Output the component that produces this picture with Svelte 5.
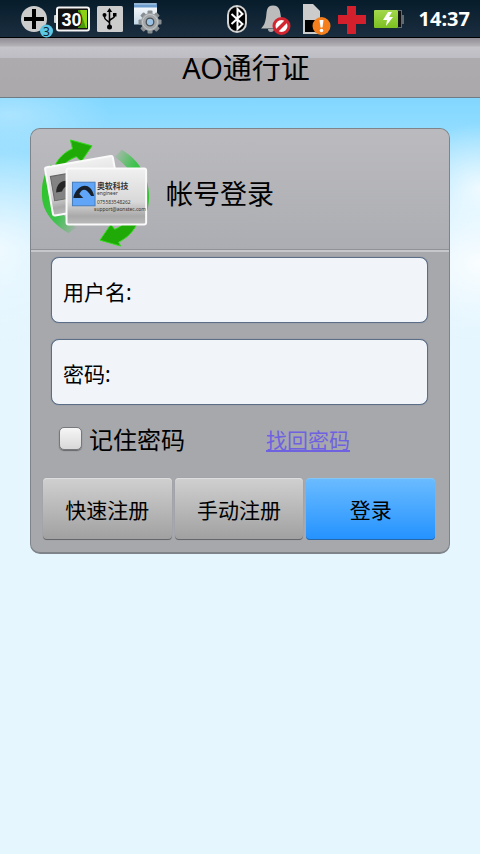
<script>
  let username = $state('');
  let password = $state('');
  let remember = $state(false);
</script>

<div class="screen">
  <header class="status">
    <svg viewBox="0 0 38 38" aria-hidden="true">
      <circle cx="18" cy="19" r="13" fill="#ccc" />
      <path d="M18 9v20M8 19h20" stroke="#000" stroke-width="4" />
      <circle cx="30.500" cy="31" r="6.500" fill="#5cc8e4" />
      <text x="30.500" y="35.500" font-size="12" text-anchor="middle" fill="#123">3</text>
    </svg>
    <svg viewBox="0 0 38 38" aria-hidden="true">
      <rect x="0" y="15" width="4" height="8" rx="1" fill="#ccd4d8" />
      <rect x="3" y="7.500" width="32" height="23" rx="2" fill="#111" stroke="#f4f4f4" stroke-width="2" />
      <path d="M24 10h9v18h-9z" fill="#8ed014" />
      <path d="M24 10h2l6 18h-8z" fill="#4b9c08" />
      <text x="17.500" y="25.500" font-family="Liberation Sans, sans-serif" font-size="18" font-weight="bold" text-anchor="middle" fill="#fff" stroke="#111" stroke-width="2" paint-order="stroke">30</text>
    </svg>
    <svg viewBox="0 0 38 38" aria-hidden="true">
      <rect x="5" y="6" width="26" height="26" rx="1.500" fill="#ccc" />
      <path d="M17.500 27V10M17.500 23c-1-3-5-2-5-6v-2M17.500 21c1-3 5-2 5-5v-2" fill="none" stroke="#000" stroke-width="1.500" />
      <path d="M14.800 12L17.500 8l2.700 4z" />
      <rect x="21" y="13" width="3.500" height="3.500" />
      <circle cx="12.500" cy="15" r="2" />
      <circle cx="17.500" cy="27" r="2.500" />
    </svg>
    <svg viewBox="0 0 38 38" aria-hidden="true">
      <defs>
        <linearGradient id="win" x2="0" y2="1"><stop stop-color="#fff" /><stop offset="1" stop-color="#c2d6e6" /></linearGradient>
      </defs>
      <rect x="4" y="3.500" width="23" height="21" fill="url(#win)" />
      <path d="M4 3.500h23v4H4z" fill="#6d9dcc" />
      <path d="M4 4h22" stroke="#b6d2ec" />
      <g transform="translate(20 22)">
        <g fill="#888d91">
          {#each [0, 45, 90, 135] as angle}
            <rect x="-2.500" y="-11.500" width="5" height="23" rx="1" transform="rotate({angle})" />
          {/each}
        </g>
        <circle r="6.500" fill="none" stroke="#a2a6a8" stroke-width="5" />
        <circle r="7.500" fill="none" stroke="#c4c7c8" stroke-width="1" />
        <circle r="3.800" fill="#9cc3e4" stroke="#4b5358" stroke-width="1.300" />
      </g>
    </svg>
    <span class="space"></span>
    <svg viewBox="0 0 38 38" aria-hidden="true">
      <rect x="9" y="6" width="18" height="26" rx="9" fill="#000" stroke="#d2d2d2" stroke-width="2" />
      <path d="M12.500 14l11 10-5 5V9l5 5-11 10" fill="none" stroke="#fff" stroke-width="2" />
    </svg>
    <svg viewBox="0 0 38 38" aria-hidden="true">
      <path d="M16 5.500c7 0 7 6 8 12s3 8 5 11H4c3-3 4-5 5-11s0-12 7-12z" fill="#bcbcbc" />
      <path d="M11 29h6a3 3 0 0 1-6 0z" fill="#aaa" />
      <circle cx="24.500" cy="26" r="7.500" fill="#fff" stroke="#d22530" stroke-width="3" />
      <path d="M19.500 31l10-10" stroke="#d22530" stroke-width="3.500" />
    </svg>
    <svg viewBox="0 0 38 38" aria-hidden="true">
      <path d="M8 4h10l7 7v23H8z" fill="#ccc" />
      <path d="M10 20h15v12H10z" fill="#000" />
      <circle cx="26.500" cy="26" r="9" fill="#f47f1c" />
      <path d="M24.500 20h4l-1 7.500h-2z" fill="#fff" />
      <circle cx="26.500" cy="30.500" r="1.800" fill="#fff" />
    </svg>
    <svg viewBox="0 0 38 38" aria-hidden="true">
      <path d="M14 6h9v9h10v9H23v10h-9V24H5v-9h9z" fill="#d41f2c" />
    </svg>
    <svg viewBox="0 0 38 38" aria-hidden="true">
      <defs>
        <linearGradient id="charge" x2="0" y2="1"><stop stop-color="#a3d84c" /><stop offset="1" stop-color="#7cc021" /></linearGradient>
      </defs>
      <path d="M27 10h4v5h2v9h-2v4h-4z" fill="#606a72" />
      <path d="M27 11h3v16h-3z" fill="#111" />
      <rect x="3" y="10" width="24" height="18" rx="1" fill="url(#charge)" />
      <path d="M17 12l-5 8h4l-1 6 7-9h-4l3-5z" fill="#fff" />
    </svg>
    <time>14:37</time>
  </header>

  <h1>AO通行证</h1>

  <main>
    <form class="card" onsubmit={(e) => e.preventDefault()}>
      <div class="head">
        <svg class="logo" viewBox="0 0 114 114" aria-hidden="true">
          <defs>
            <linearGradient id="arcR" x1="0" y1="0" x2="1" y2="1"><stop offset="0" stop-color="#38c048" stop-opacity="0" /><stop offset=".4" stop-color="#3cc34b" /><stop offset="1" stop-color="#28c51b" /></linearGradient>
            <linearGradient id="arcL" x1="1" y1="1" x2="0" y2="0"><stop offset="0" stop-color="#38c048" stop-opacity="0" /><stop offset=".4" stop-color="#3cc34b" /><stop offset="1" stop-color="#28c51b" /></linearGradient>
            <linearGradient id="paper" x2="0" y2="1"><stop stop-color="#f0f0f0" /><stop offset=".6" stop-color="#d8d8d8" /><stop offset=".85" stop-color="#a9a9a9" /><stop offset="1" stop-color="#bbb" /></linearGradient>
          </defs>
          <path d="M82 12C98 21 110 38 110 59c0 12-3 21-8 28l-6-6c7-20 5-44-21-62z" fill="url(#arcR)" />
          <path d="M28 97C7 84 0 70 1 54c0-10 3-20 9-27l8 6C10 54 14 74 36 91z" fill="url(#arcL)" />
          <path d="M13 31C17 20 25 14 32 11l-2-9 22 6-11 16-5-5C28 22 23 26 20 33z" fill="#20aa08" stroke="#35d920" />
          <path d="M99 85c-5 11-12 17-20 21l2 4-21-6 11-16 4 5c5-2 9-5 11-8z" fill="#20aa08" stroke="#35d920" />
          <g transform="rotate(-10 40 45)">
            <rect x="7" y="24" width="70" height="50" rx="2" fill="url(#paper)" stroke="#fafafa" stroke-width="2" />
            <rect x="11" y="34" width="23" height="25" fill="#838383" stroke="#666" />
            <path d="M14 51c2-11 12-13 19-6v5c-6-5-10-4-13 1z" fill="#252525" />
          </g>
          <rect x="26" y="31" width="81" height="57" rx="2" fill="url(#paper)" stroke="#fafafa" stroke-width="2" />
          <rect x="32" y="45" width="23" height="24" fill="#60a5f8" stroke="#447bbc" />
          <path d="M33 60c4-14 18-16 21-1h-3c-5-8-9-8-12-2l4 4H34c-1 0-1 0-1-1z" fill="#18202b" />
          <g fill="#333">
            <text x="57" y="52" font-size="8" font-weight="bold">奥软科技</text>
            <text x="57" y="58" font-size="5">engineer</text>
            <text x="57" y="67" font-size="5">075583548262</text>
            <text x="54" y="74" font-size="5">support@aonstec.com</text>
          </g>
        </svg>
        <h2>帐号登录</h2>
      </div>
      <div class="fields">
        <label class="field">用户名:<input type="text" bind:value={username} /></label>
        <label class="field">密码:<input type="password" bind:value={password} /></label>
      </div>
      <div class="options">
        <label class="remember"><input type="checkbox" bind:checked={remember} />记住密码</label>
        <div class="recover"><a href="#recover">找回密码</a></div>
      </div>
      <div class="actions">
        <button type="button">快速注册</button>
        <button type="button">手动注册</button>
        <button type="submit" class="primary">登录</button>
      </div>
    </form>
  </main>
</div>

<style>
  :global(body) { margin: 0; }
  * { box-sizing: border-box; }
  .screen {
    min-height: 100vh;
    display: flex;
    flex-direction: column;
    background: #e6f6fe;
    color: #000;
    font-family: "Noto Sans", "Noto Sans CJK SC", sans-serif;
  }
  .status {
    height: 38px;
    padding: 0 10px 0 16px;
    display: flex;
    align-items: center;
    background: linear-gradient(#071c2b, #1b2e40);
    border-bottom: 1px solid #000;
  }
  .status svg { width: 38px; height: 38px; flex: none; }
  .space { flex: 1; }
  time {
    margin-left: 10px;
    color: #fff;
    font-size: 20px;
    line-height: 38px;
    font-weight: bold;
  }
  h1 {
    margin: 0;
    height: 60px;
    padding-left: 12px;
    text-align: center;
    font-size: 29px;
    line-height: 60px;
    font-weight: 400;
    background: linear-gradient(#8f8d93 0, #b4b2b7 8px, #c5c4ca 9px, #bebdc5 20px, #adabae 20px, #aaa8ab 100%);
    border-bottom: 1px solid #6c7b84;
  }
  main {
    flex: 1;
    padding: 30px;
    background:
      radial-gradient(ellipse 100px 40px at 10px 16px, #c8edff88, transparent),
      radial-gradient(ellipse 80px 65px at 100% 90px, #fffc, transparent),
      radial-gradient(ellipse 110px 80px at 100% 165px, #fffd, transparent),
      radial-gradient(ellipse 90px 100px at 0 150px, #fff9, transparent),
      linear-gradient(#82d7ff 0, #94ddff 40px, #ace5ff 90px, #d4f1ff 150px, #e6f6fe 250px);
  }
  .card {
    border: 1px solid #7e8489;
    border-bottom-width: 2px;
    border-radius: 10px;
    background: #a7a8ac;
  }
  .head {
    height: 123px;
    display: flex;
    align-items: center;
    gap: 13px;
    padding: 8px 10px 0;
    background: linear-gradient(#bbbbbf, #acadb2);
    border-bottom: 2px solid #c6c7cb;
    border-radius: 9px 9px 0 0;
    box-shadow: inset 0 -1px #909297;
  }
  .logo { width: 112px; height: 112px; flex: none; }
  .logo, .status svg { display: block; }
  h2 {
    margin: 0;
    font-size: 27px;
    line-height: 40px;
    font-weight: 400;
  }
  .fields {
    display: grid;
    gap: 16px;
    padding: 5px 21px 0 20px;
  }
  .field {
    height: 66px;
    padding: 2px 11px 0;
    display: flex;
    align-items: center;
    gap: 8px;
    border: 1px solid #5b6e86;
    border-radius: 8px;
    background: #f1f5fa;
    box-shadow: 0 0 1px #5b6e86;
    font-size: 21px;
  }
  .field input {
    flex: 1;
    min-width: 0;
    border: 0;
    padding: 0;
    outline: 0;
    background: none;
    font: inherit;
  }
  .options {
    height: 70px;
    padding: 0 28px;
    display: grid;
    grid-template-columns: 1fr 1fr;
    align-items: center;
  }
  .remember {
    display: flex;
    align-items: center;
    gap: 7px;
    font-size: 24px;
    line-height: 36px;
  }
  .remember input {
    appearance: none;
    width: 23px;
    height: 23px;
    margin: 0 0 4px;
    border: 1px solid #77787b;
    border-radius: 5px;
    background: linear-gradient(#f6f6f6, #d8d8d8);
    box-shadow: 0 1px 1px #66676a;
  }
  .remember input:checked { background: #3399ff; }
  .recover { padding-left: 26px; font-size: 21px; line-height: 32px; }
  a { color: #6e62e0; text-underline-offset: 2px; }
  .actions {
    display: grid;
    grid-template-columns: repeat(3, 1fr);
    gap: 3px;
    padding: 3px 14px 12px 12px;
  }
  button {
    height: 62px;
    padding: 0;
    border: 0;
    border-radius: 4px;
    color: #000;
    font: inherit;
    font-size: 21px;
    background: linear-gradient(#d0d0d0, #a0a0a0);
    box-shadow: inset 0 1px #dedede, inset 0 -1px #66676a, 0 0 1px #88898c;
  }
  .primary {
    background: linear-gradient(#6bbcff, #2492ff);
    box-shadow: inset 0 1px #85c5f5, inset 0 -1px #2767aa;
  }
</style>
